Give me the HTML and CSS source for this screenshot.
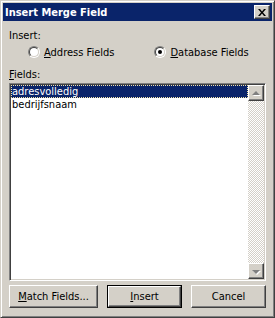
FILE: index.html
```html
<!DOCTYPE html>
<html>
<head>
<meta charset="utf-8">
<link rel="stylesheet" href="styles.css">
</head>
<body>
<div class="window">
  <div class="titlebar">
    <span class="title">Insert Merge Field</span>
    <div class="close bevel">
      <svg width="8" height="7" viewBox="0 0 8 7"><path d="M0 0h2l2 2.5L6 0h2L5 3.5 8 7H6L4 4.5 2 7H0l3-3.5z" fill="#000"/></svg>
    </div>
  </div>
  <div class="content">
    <div class="label">Insert:</div>
    <div class="radios">
      <div class="radio r-addr"><span class="rb"></span><span class="rtext"><u>A</u>ddress Fields</span></div>
      <div class="radio r-db"><span class="rb checked"></span><span class="rtext"><u>D</u>atabase Fields</span></div>
    </div>
    <div class="label fields-label"><u>F</u>ields:</div>
    <div class="listbox">
      <div class="items">
        <div class="item sel">adresvolledig</div>
        <div class="item">bedrijfsnaam</div>
      </div>
      <div class="scrollbar">
        <div class="sbtn bevel"><span class="arrow up"></span></div>
        <div class="track"></div>
        <div class="sbtn bevel"><span class="arrow down"></span></div>
      </div>
    </div>
    <div class="buttons">
      <div class="btn bevel match"><span><u>M</u>atch Fields...</span></div>
      <div class="btn default"><div class="bevel inner"><span><u>I</u>nsert</span></div></div>
      <div class="btn bevel"><span>Cancel</span></div>
    </div>
  </div>
</div>
</body>
</html>
```

FILE: styles.css
```css
html, body {
  margin: 0;
  padding: 0;
  background: #d4d0c8;
}
body {
  font-family: "DejaVu Sans Condensed", "DejaVu Sans", sans-serif;
  font-size: 11px;
  color: #000;
}
.window {
  width: 275px;
  height: 318px;
  box-sizing: border-box;
  background: #d4d0c8;
  border: 1px solid;
  border-color: #d4d0c8 #404040 #404040 #d4d0c8;
  box-shadow: inset 1px 1px #fff, inset -1px -1px #808080;
  padding: 2px;
  display: flex;
  flex-direction: column;
}
.titlebar {
  height: 18px;
  background: #0a246a;
  display: flex;
  align-items: center;
  justify-content: space-between;
  padding: 0 2px 0 2px;
}
.title {
  color: #fff;
  font-weight: bold;
  font-size: 11px;
  line-height: 13px;
}
.bevel {
  box-sizing: border-box;
  background: #d4d0c8;
  border: 1px solid;
  border-color: #fff #404040 #404040 #fff;
  box-shadow: inset -1px -1px #808080;
}
.close {
  width: 16px;
  height: 14px;
  display: flex;
  align-items: center;
  justify-content: center;
  padding-right: 1px;
}
.close svg { display: block; }
.content {
  flex: 1;
  padding: 0 6px 0 6px;
  display: flex;
  flex-direction: column;
}
.label {
  line-height: 13px;
  height: 13px;
  margin-top: 8px;
}
.radios {
  display: flex;
  height: 14px;
  margin-top: 3px;
  align-items: center;
}
.radio {
  display: flex;
  align-items: center;
}
.r-addr { margin-left: 19px; }
.r-db { margin-left: 40px; }
.rb {
  width: 12px;
  height: 12px;
  box-sizing: border-box;
  border-radius: 50%;
  border: 1px solid;
  border-color: #808080 #fff #fff #808080;
  position: relative;
  display: block;
}
.rb::before {
  content: "";
  position: absolute;
  inset: 0;
  border-radius: 50%;
  border: 1px solid;
  border-color: #404040 #d4d0c8 #d4d0c8 #404040;
  background: #fff;
}
.rb.checked::after {
  content: "";
  position: absolute;
  left: 3px;
  top: 3px;
  width: 4px;
  height: 4px;
  border-radius: 50%;
  background: #000;
}
.rtext {
  margin-left: 4px;
  line-height: 13px;
}
.fields-label { margin-top: 9px; }
.listbox {
  margin-top: 2px;
  height: 198px;
  box-sizing: border-box;
  border: 1px solid;
  border-color: #808080 #fff #fff #808080;
  box-shadow: inset 1px 1px #404040, inset -1px -1px #d4d0c8;
  padding: 1px 1px 1px 1px;
  background: #fff;
  display: flex;
}
.items {
  flex: 1;
  padding-top: 0;
}
.item {
  height: 13px;
  line-height: 13px;
  padding-left: 1px;
}
.item.sel {
  background: #0a246a;
  color: #fff;
  outline: 1px dotted #f2e3a8;
  outline-offset: -1px;
}
.scrollbar {
  width: 16px;
  display: flex;
  flex-direction: column;
}
.sbtn {
  height: 16px;
  display: flex;
  align-items: center;
  justify-content: center;
}
.track {
  flex: 1;
  background-color: #d4d0c8;
  background-image: repeating-conic-gradient(#fff 0 25%, #d4d0c8 0 50%);
  background-size: 2px 2px;
}
.arrow {
  width: 0;
  height: 0;
  border-left: 4px solid transparent;
  border-right: 4px solid transparent;
  filter: drop-shadow(1px 1px 0 #fff);
}
.arrow.up { border-bottom: 4px solid #808080; margin-bottom: 1px; }
.arrow.down { border-top: 4px solid #808080; margin-top: 1px; }
.buttons {
  display: flex;
  gap: 9px;
  margin-top: 4px;
}
.btn {
  height: 23px;
  width: 75px;
  display: flex;
  align-items: center;
  justify-content: center;
  line-height: 13px;
}
.btn.match { width: 89px; }
.btn.default {
  box-sizing: border-box;
  border: 1px solid #000;
}
.btn.default .inner {
  width: 100%;
  height: 100%;
  display: flex;
  align-items: center;
  justify-content: center;
}
u { text-decoration: underline; text-underline-offset: 1px; }
```
